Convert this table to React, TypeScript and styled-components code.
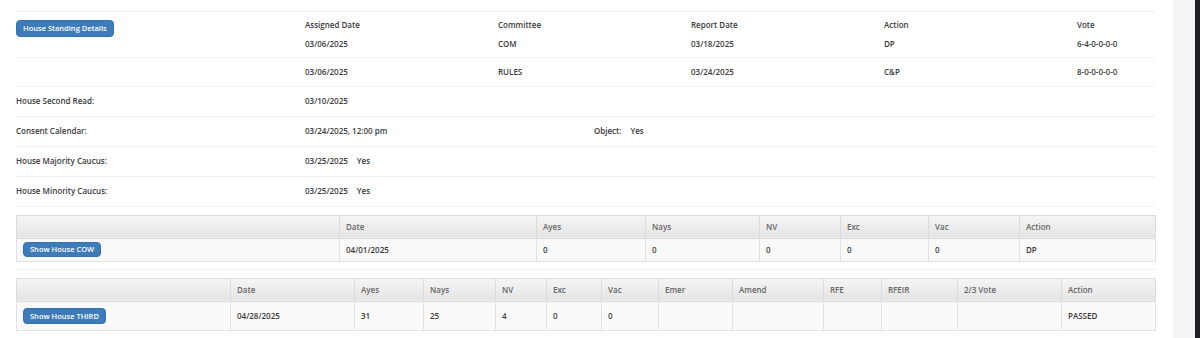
import React from "react";
import styled, { createGlobalStyle } from "styled-components";

const GlobalStyle = createGlobalStyle`
  html, body {
    margin: 0;
    padding: 0;
    background: #ffffff;
  }
  body {
    font-family: "Open Sans", "Liberation Sans", sans-serif;
    font-size: 8px;
    color: #333333;
  }
`;

const committees = [
  { assigned: "03/06/2025", committee: "COM", report: "03/18/2025", action: "DP", vote: "6-4-0-0-0-0" },
  { assigned: "03/06/2025", committee: "RULES", report: "03/24/2025", action: "C&P", vote: "8-0-0-0-0-0" },
];

const cowColumns = [
  { title: "", width: 323 },
  { title: "Date", width: 197 },
  { title: "Ayes", width: 109 },
  { title: "Nays", width: 114 },
  { title: "NV", width: 81 },
  { title: "Exc", width: 88 },
  { title: "Vac", width: 91 },
  { title: "Action", width: 136 },
];

const cowValues = ["04/01/2025", "0", "0", "0", "0", "0", "DP"];

const thirdColumns = [
  { title: "", width: 214 },
  { title: "Date", width: 124 },
  { title: "Ayes", width: 69 },
  { title: "Nays", width: 72 },
  { title: "NV", width: 51 },
  { title: "Exc", width: 55 },
  { title: "Vac", width: 57 },
  { title: "Emer", width: 74 },
  { title: "Amend", width: 91 },
  { title: "RFE", width: 58 },
  { title: "RFEIR", width: 76 },
  { title: "2/3 Vote", width: 104 },
  { title: "Action", width: 94 },
];

const thirdValues = ["04/28/2025", "31", "25", "4", "0", "0", "", "", "", "", "", "PASSED"];

const DETAIL_COLS = "289px 193px 193px 193px 193px 1fr";

function App() {
  return (
    <>
      <GlobalStyle />
      <Layout>
        <Main>
          <DetailRow $cols={DETAIL_COLS} $pad="8px 0 7px">
            <div>
              <BlueButton $height={17}>House Standing Details</BlueButton>
            </div>
            <Stack>
              <span>Assigned Date</span>
              <span>{committees[0].assigned}</span>
            </Stack>
            <Stack>
              <span>Committee</span>
              <span>{committees[0].committee}</span>
            </Stack>
            <Stack>
              <span>Report Date</span>
              <span>{committees[0].report}</span>
            </Stack>
            <Stack>
              <span>Action</span>
              <span>{committees[0].action}</span>
            </Stack>
            <Stack>
              <span>Vote</span>
              <span>{committees[0].vote}</span>
            </Stack>
          </DetailRow>

          <DetailRow $cols={DETAIL_COLS}>
            <span />
            <span>{committees[1].assigned}</span>
            <span>{committees[1].committee}</span>
            <span>{committees[1].report}</span>
            <span>{committees[1].action}</span>
            <span>{committees[1].vote}</span>
          </DetailRow>

          <DetailRow $cols="289px 1fr">
            <span>House Second Read:</span>
            <span>03/10/2025</span>
          </DetailRow>

          <DetailRow $cols="289px 289px 1fr">
            <span>Consent Calendar:</span>
            <span>03/24/2025, 12:00 pm</span>
            <Pair>
              <span>Object:</span>
              <span>Yes</span>
            </Pair>
          </DetailRow>

          <DetailRow $cols="289px 1fr">
            <span>House Majority Caucus:</span>
            <Pair>
              <span>03/25/2025</span>
              <span>Yes</span>
            </Pair>
          </DetailRow>

          <DetailRow $cols="289px 1fr">
            <span>House Minority Caucus:</span>
            <Pair>
              <span>03/25/2025</span>
              <span>Yes</span>
            </Pair>
          </DetailRow>

          <TableSection>
            <VoteTable>
              <colgroup>
                {cowColumns.map((c, i) => (
                  <Col key={i} $w={c.width} />
                ))}
              </colgroup>
              <thead>
                <tr>
                  {cowColumns.map((c, i) => (
                    <HeadCell key={i}>{c.title}</HeadCell>
                  ))}
                </tr>
              </thead>
              <tbody>
                <tr>
                  <BodyCell $height={22}>
                    <BlueButton $height={15}>Show House COW</BlueButton>
                  </BodyCell>
                  {cowValues.map((v, i) => (
                    <BodyCell key={i} $height={22}>
                      {v}
                    </BodyCell>
                  ))}
                </tr>
              </tbody>
            </VoteTable>
          </TableSection>

          <TableSection $last>
            <VoteTable>
              <colgroup>
                {thirdColumns.map((c, i) => (
                  <Col key={i} $w={c.width} />
                ))}
              </colgroup>
              <thead>
                <tr>
                  {thirdColumns.map((c, i) => (
                    <HeadCell key={i}>{c.title}</HeadCell>
                  ))}
                </tr>
              </thead>
              <tbody>
                <tr>
                  <BodyCell $height={28}>
                    <BlueButton $height={16}>Show House THIRD</BlueButton>
                  </BodyCell>
                  {thirdValues.map((v, i) => (
                    <BodyCell key={i} $height={28}>
                      {v}
                    </BodyCell>
                  ))}
                </tr>
              </tbody>
            </VoteTable>
          </TableSection>
        </Main>
        <Gutter />
        <Edge />
      </Layout>
    </>
  );
}

const Layout = styled.div`
  display: flex;
  min-height: 100vh;
`;

const Main = styled.main`
  flex: 1;
  min-width: 0;
  padding: 11px 18px 0 16px;
`;

const Gutter = styled.div`
  width: 22px;
  background: #f4f4f4;
`;

const Edge = styled.div`
  width: 5px;
  background: #1d1f22;
`;

const DetailRow = styled.div<{ $cols: string; $pad?: string }>`
  display: grid;
  grid-template-columns: ${({ $cols }) => $cols};
  align-items: start;
  padding: ${({ $pad }) => $pad || "9px 0"};
  border-top: 1px solid #f0f0f0;
  line-height: 10.8px;
  font-weight: 600;
  color: #3a3a3a;
  white-space: nowrap;
`;

const Stack = styled.div`
  display: flex;
  flex-direction: column;
  gap: 8px;
`;

const Pair = styled.div`
  display: flex;
  gap: 9px;
`;

const BlueButton = styled.button<{ $height: number }>`
  display: inline-block;
  height: ${({ $height }) => $height}px;
  padding: 0 6px;
  border: 1px solid #3571ad;
  border-radius: 4px;
  background: #3d7bb9;
  color: #ffffff;
  font-family: "Open Sans", "Liberation Sans", sans-serif;
  font-size: 7.5px;
  font-weight: 600;
  line-height: ${({ $height }) => $height - 2}px;
  cursor: pointer;
  vertical-align: middle;
`;

const TableSection = styled.div<{ $last?: boolean }>`
  padding: 8px 0 7px;
  border-top: 1px solid #f0f0f0;
  border-bottom: ${({ $last }) => ($last ? "1px solid #f0f0f0" : "none")};
`;

const VoteTable = styled.table`
  width: 100%;
  table-layout: fixed;
  border-collapse: collapse;
  border: 1px solid #dddddd;
`;

const Col = styled.col<{ $w: number }>`
  width: ${({ $w }) => $w}px;
`;

const HeadCell = styled.th`
  height: 22px;
  padding: 0 6px;
  border: 1px solid #dcdcdc;
  background: linear-gradient(to bottom, #f5f5f5, #e4e4e4);
  color: #666666;
  font-weight: 600;
  text-align: left;
  vertical-align: middle;
`;

const BodyCell = styled.td<{ $height: number }>`
  height: ${({ $height }) => $height}px;
  padding: 0 6px;
  border: 1px solid #e2e2e2;
  background: #f9f9f9;
  color: #3a3a3a;
  font-weight: 600;
  vertical-align: middle;
  white-space: nowrap;
`;

export default App;
